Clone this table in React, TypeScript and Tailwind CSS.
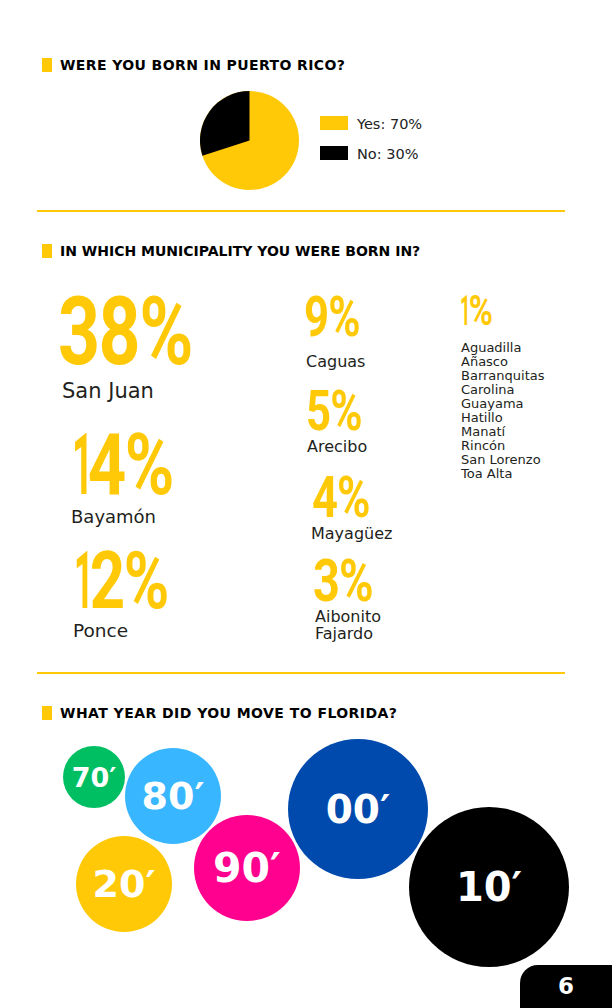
import React from 'react';

const sans = "font-['DejaVu_Sans',sans-serif]";
const num = "font-['Roboto',sans-serif] font-bold leading-[0.74] text-[#FFC907] origin-left scale-x-[0.78] tracking-[-0.02em]";
const label = `${sans} leading-none text-[#231F20]`;
const one = 'inline-block origin-left scale-x-[0.55]';

const Heading = ({ children, className = '' }: { children: React.ReactNode; className?: string }) => (
  <div className={`ml-[5px] flex items-center gap-2 ${className}`}>
    <span className="h-[14px] w-[10px] bg-[#FFC907]" />
    <h2 className={`${sans} text-[14px] font-bold leading-[14px] text-black`}>{children}</h2>
  </div>
);

const bubbles = [
  { text: '70′', pos: 'left-[63px] top-[26px] h-[62px] w-[62px] bg-[#00BF63] text-[27px]' },
  { text: '80′', pos: 'left-[125px] top-[28px] h-[96px] w-[96px] bg-[#38B6FF] text-[38px]' },
  { text: '20′', pos: 'left-[76px] top-[116px] h-[96px] w-[96px] bg-[#FFC907] text-[38px]' },
  { text: '90′', pos: 'left-[194px] top-[95px] h-[106px] w-[106px] bg-[#FF008F] text-[41px]' },
  { text: '00′', pos: 'left-[288px] top-[19px] h-[140px] w-[140px] bg-[#004AAD] text-[39px]' },
  { text: '10′', pos: 'left-[409px] top-[87px] h-[160px] w-[160px] bg-black text-[40px]' },
];

const towns = ['Aguadilla', 'Añasco', 'Barranquitas', 'Carolina', 'Guayama', 'Hatillo', 'Manatí', 'Rincón', 'San Lorenzo', 'Toa Alta'];

export default function App() {
  return (
    <div className="relative h-[1008px] w-[612px] overflow-hidden bg-white">
      <div className="pl-[37px] pr-[47px] pt-[58px]">
        {/* Born in Puerto Rico */}
        <Heading className="tracking-[0.4px]">WERE YOU BORN IN PUERTO RICO?</Heading>
        <div className="ml-[163px] mt-[19px] flex items-start gap-[21px]">
          <svg viewBox="0 0 100 100" className="h-[99px] w-[99px]">
            <circle cx="50" cy="50" r="50" fill="#FFC907" />
            <path d="M50 50 L50 0 A50 50 0 0 0 2.45 65.45 Z" fill="#000" />
          </svg>
          <div className="mt-[24px] flex flex-col gap-[14px]">
            <div className="flex items-center gap-[9px]">
              <span className="h-[14px] w-[28px] bg-[#FFC907]" />
              <span className={`${sans} mt-[2px] text-[14.5px] leading-none text-[#222]`}>Yes: 70%</span>
            </div>
            <div className="flex items-center gap-[9px]">
              <span className="h-[14px] w-[28px] bg-black" />
              <span className={`${sans} mt-[1px] text-[14.5px] leading-none text-[#222]`}>No: 30%</span>
            </div>
          </div>
        </div>

        <div className="mt-[20px] h-[2px] bg-[#FFC907]" />

        {/* Municipality */}
        <Heading className="mt-[32px]">IN WHICH MUNICIPALITY YOU WERE BORN IN?</Heading>
        <div className="mt-[28px] grid grid-cols-[263px_155px_1fr]">
          <div className="flex flex-col">
            <div className={`${num} ml-[21px] mt-[12px] text-[94px]`}>38%</div>
            <div className={`${label} ml-[25px] mt-[13px] text-[21px]`}>San Juan</div>
            <div className={`${num} ml-[35px] mt-[31px] text-[86px]`}>
              <span className={`${one} -mr-[0.32em]`}>1</span>4%
            </div>
            <div className={`${label} ml-[34px] mt-[12px] text-[18px]`}>Bayamón</div>
            <div className={`${num} ml-[37px] mt-[26px] text-[79px]`}>
              <span className={`${one} -mr-[0.3em]`}>1</span>2%
            </div>
            <div className={`${label} ml-[36px] mt-[11px] text-[18.5px]`}>Ponce</div>
          </div>
          <div className="flex flex-col">
            <div className={`${num} ml-[4px] mt-[11px] text-[56px]`}>9%</div>
            <div className={`${label} ml-[6px] mt-[16px] text-[16px]`}>Caguas</div>
            <div className={`${num} ml-[6px] mt-[21px] text-[56px]`}>5%</div>
            <div className={`${label} ml-[7px] mt-[6px] text-[16px]`}>Arecibo</div>
            <div className={`${num} ml-[12px] mt-[21px] text-[58px]`}>4%</div>
            <div className={`${label} ml-[11px] mt-[7px] text-[16px]`}>Mayagüez</div>
            <div className={`${num} ml-[13px] mt-[17px] text-[60px]`}>3%</div>
            <div className={`${sans} ml-[15px] mt-[5px] text-[16px] leading-[17px] text-[#231F20]`}>
              <div>Aibonito</div>
              <div>Fajardo</div>
            </div>
          </div>
          <div className="flex flex-col">
            <div className={`${num} ml-[5px] mt-[9px] text-[42px]`}>
              <span className={`${one} -mr-[0.29em]`}>1</span>%
            </div>
            <ul className={`${sans} ml-[6px] mt-[15px] text-[13px] leading-[14px] text-[#231F20]`}>
              {towns.map((t) => (
                <li key={t}>{t}</li>
              ))}
            </ul>
          </div>
        </div>

        <div className="mt-[30px] h-[2px] bg-[#FFC907]" />

        {/* Year moved */}
        <Heading className="mt-[32px] tracking-[0.45px]">WHAT YEAR DID YOU MOVE TO FLORIDA?</Heading>
      </div>

      <div className="relative h-[288px] w-full">
        {bubbles.map((b) => (
          <div
            key={b.text}
            className={`absolute flex items-center justify-center rounded-full ${sans} font-bold leading-none text-white ${b.pos}`}
          >
            {b.text}
          </div>
        ))}
      </div>

      <div className={`absolute bottom-0 right-0 flex h-[43px] w-[92px] items-center justify-center rounded-tl-[18px] bg-black ${sans} text-[23px] font-bold text-white`}>
        6
      </div>
    </div>
  );
}
